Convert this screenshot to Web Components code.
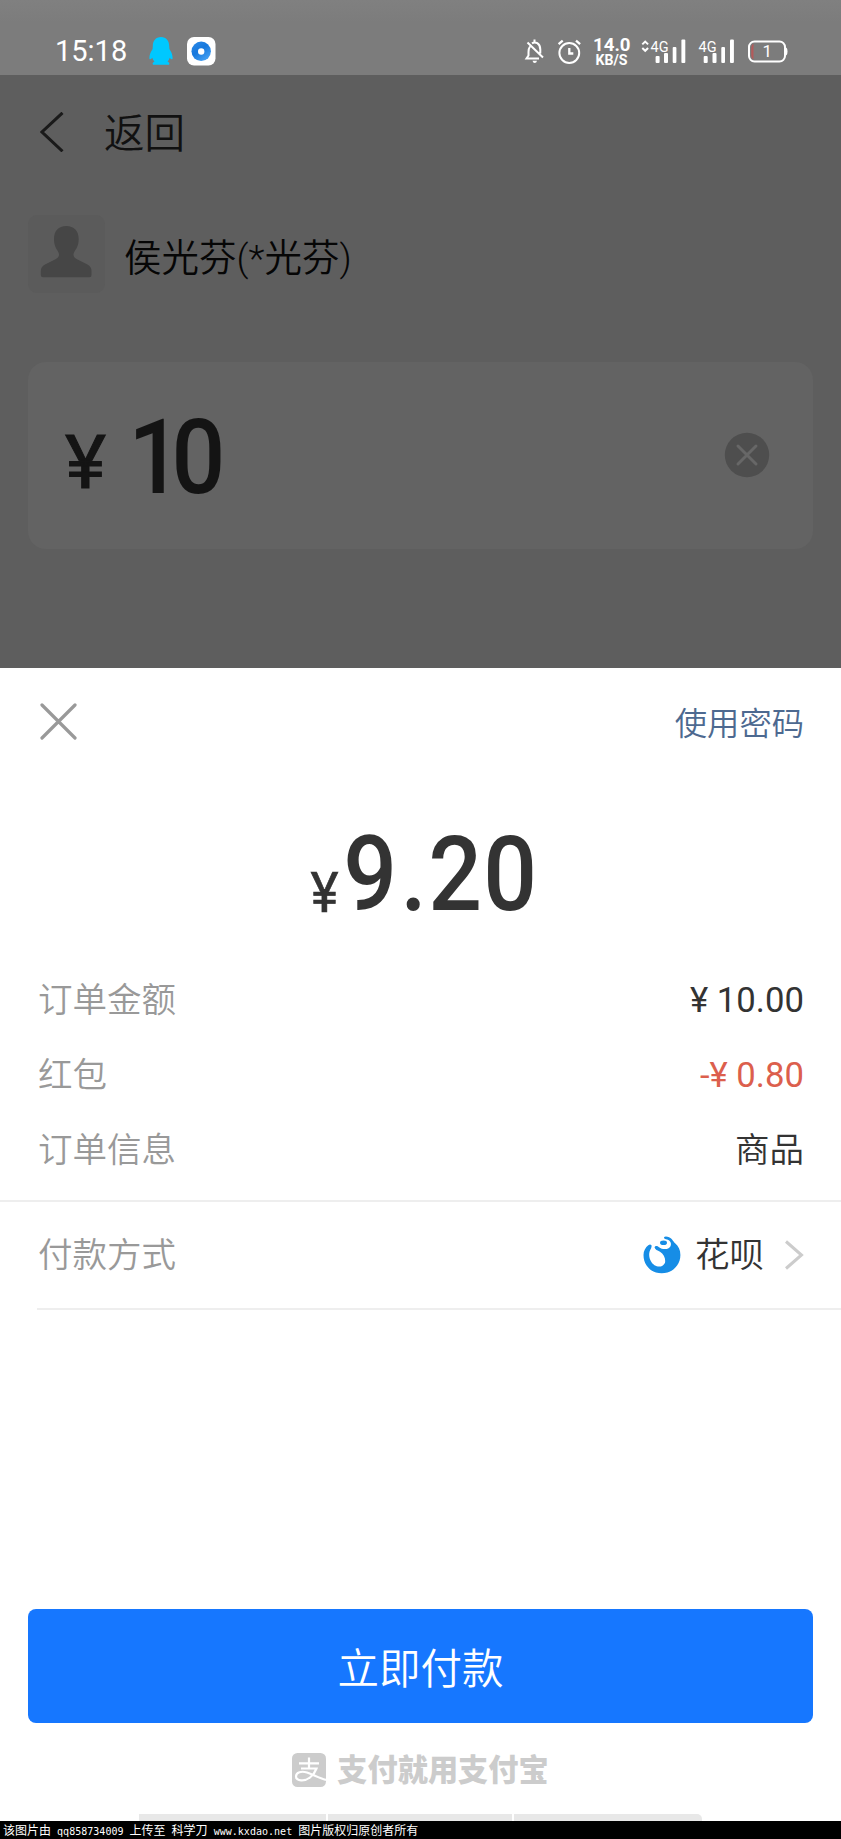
<!DOCTYPE html>
<html lang="zh-CN">
<head>
<meta charset="utf-8">
<title>付款</title>
<style>
html,body{margin:0;padding:0}
body{width:841px;height:1839px;overflow:hidden;background:#fff;font-family:Roboto,"Noto Sans CJK SC",sans-serif}
</style>
</head>
<body>
<pay-screen></pay-screen>
<script>
function define(name, html){
  const t=document.createElement('template');
  t.innerHTML=html;
  customElements.define(name, class extends HTMLElement{
    constructor(){super();this.attachShadow({mode:'open'}).appendChild(t.content.cloneNode(true));}
  });
}

define('status-bar', `
<style>
:host{display:flex;box-sizing:border-box;height:75px;padding:0 53px 0 55px;background:linear-gradient(#808080,#7c7c7c 30%,#7c7c7c);color:#fff;align-items:flex-start}
svg{display:block;flex:none}
time{font:400 29px/34px Roboto,sans-serif;margin-top:34px;width:94px;white-space:nowrap}
.app{margin:37px 0 0 14px}
.spring{flex:1}
.r{margin-top:16px;overflow:visible}
</style>
<time>15:18</time>
<svg style="margin-top:37px" width="24" height="29" viewBox="0 0 24 29"><path fill="#00c8ff" d="M12 0C6.600 0 3.800 4 3.800 9L3.600 12Q0 17.500.4 21.500Q.7 23.400 3.300 20.800Q4 23.300 5.500 24.600Q2.800 25.800 4 27.800H20Q21.200 25.800 18.500 24.600Q20 23.300 20.700 20.800Q23.300 23.400 23.600 21.500Q24 17.500 20.400 12L20.200 9C20.200 4 17.400 0 12 0Z"/></svg>
<svg class="app" width="29" height="29" viewBox="0 0 29 29"><defs><linearGradient id="g" x1="0" y1="0" x2=".7" y2="1"><stop offset="0" stop-color="#2e8be8"/><stop offset=".5" stop-color="#1678dd"/><stop offset="1" stop-color="#45a0f2"/></linearGradient></defs><rect width="28.500" height="28.500" rx="7" fill="#fff"/><circle cx="14.200" cy="14.300" r="9.700" fill="url(#g)"/><circle cx="14.200" cy="14.500" r="3.200" fill="#fff"/></svg>
<span class="spring"></span>
<svg class="r" width="264" height="59" viewBox="524 16 264 59" fill="none" stroke="#fff" stroke-width="2">
 <path d="M530 46.500Q528.500 48.500 528.500 52V55.500L526.500 58.500H539M532 43.400Q534.500 41.600 537.300 43.200Q540.200 45 540.300 49.500V53.500M534.500 39.500V42M527.500 42.500L543 57.500"/><path d="M532.500 60.700H537Q536.500 63 534.700 63Q533 63 532.500 60.700Z" fill="#fff" stroke="none"/>
 <circle cx="569.300" cy="53" r="9.900"/><path d="M569.300 48V53.500H573.300M558.600 44.200L562.700 40.700M576 40.700L580.100 44.200" stroke-width="2.300"/>
 <g fill="#fff" stroke="none" font-family="Roboto,sans-serif">
  <text x="593" y="51" font-size="18" font-weight="700" textLength="37.500" lengthAdjust="spacingAndGlyphs">14.0</text>
  <text x="595.500" y="65" font-size="14" font-weight="700" textLength="32" lengthAdjust="spacingAndGlyphs">KB/S</text>
  <text x="650.500" y="51.600" font-size="15.500" textLength="18" lengthAdjust="spacingAndGlyphs">4G</text>
  <text x="698.500" y="51.600" font-size="15.500" textLength="18" lengthAdjust="spacingAndGlyphs">4G</text>
  <rect x="655.600" y="56" width="4" height="7" rx="1"/><rect x="664" y="53" width="4" height="10" rx="1"/><rect x="672.700" y="47" width="3.700" height="16" rx="1"/><rect x="681.400" y="39.500" width="3.900" height="23.500" rx="1"/>
  <rect x="703.700" y="56" width="4" height="7" rx="1"/><rect x="712.500" y="53" width="4" height="10" rx="1"/><rect x="721.300" y="47" width="3.700" height="16" rx="1"/><rect x="730" y="39.500" width="3.900" height="23.500" rx="1"/>
  <text x="762.500" y="57.300" font-size="17">1</text>
  <path d="M785.500 47.500Q787.500 47.500 787.500 51.500T785.500 55.500Z"/>
 </g>
 <path d="M642.300 44.400L645.200 41.600L648.100 44.400M642.300 48L645.200 50.800L648.100 48"/>
 <path d="M753.500 43.500Q751.200 44.500 751.200 48V55Q751.200 58.500 753.500 59.500Z" fill="#b35a5a" stroke="none"/>
 <rect x="749" y="41.500" width="36" height="20" rx="5.500"/>
</svg>`);

define('page-header', `
<style>
:host{display:flex;align-items:center;height:113px;padding-left:40px;box-sizing:border-box}
svg{display:block;margin-right:40px}
b{font:350 40.500px/60px "Noto Sans CJK SC",sans-serif;color:#111;margin-top:-2px}
</style>
<svg width="24" height="40" viewBox="0 0 24 40"><path d="M22.500 .8L2 20L22.500 39.300" fill="none" stroke="#1a1a1a" stroke-width="3"/></svg><b><slot></slot></b>`);

define('payee-info', `
<style>
:host{display:flex;align-items:center;height:78px;margin-top:27px;padding-left:28px}
i{display:block;width:77px;height:78px;border-radius:9px;background:#5b5b5b}
svg{display:block}
span{font:350 37.500px/54px Roboto,"Noto Sans CJK SC",sans-serif;margin:7px 0 0 19px;color:#060606;white-space:nowrap}
</style>
<i><svg width="77" height="78" viewBox="0 0 77 78"><path fill="#464646" d="M38.300 11C30.500 11 26 16 26 24C26 30.500 28.200 33.500 30 36.500C32 40 31 42.500 27.500 44.200L17 49.500Q12.800 51.800 12.800 56V60Q12.800 62.300 15 62.300H61.500Q63.500 62.300 63.500 60V56Q63.500 51.800 59.500 49.500L49 44.200C45.500 42.500 44.500 40 46.500 36.500C48.500 33.500 50.700 30.500 50.700 24C50.700 16 46 11 38.300 11Z"/></svg></i><span><slot></slot></span>`);

define('amount-card', `
<style>
:host{display:flex;align-items:center;justify-content:space-between;box-sizing:border-box;width:785px;height:187px;margin:69px 28px 0;padding:0 43px 0 32px;border-radius:18px;background:#636363}
svg{display:block;overflow:visible}
.clear{margin-bottom:2px}
</style>
<svg width="170" height="150" viewBox="60 380.500 170 150" fill="#141414" font-family="Roboto,sans-serif" font-weight="500"><text x="65" y="487" font-size="75" font-weight="400" stroke="#141414" stroke-width="1" textLength="41" lengthAdjust="spacingAndGlyphs">¥</text><text transform="scale(.91 1)" x="141 188.500" y="493" font-size="104">10</text></svg>
<svg class="clear" width="46" height="46" viewBox="-23 -23 46 46"><circle r="22.200" fill="#4e4e4e"/><path d="M-9 -9L9 9M9 -9L-9 9" stroke="#676767" stroke-width="3" stroke-linecap="round"/></svg>`);

define('sheet-head', `
<style>
:host{display:flex;justify-content:space-between;align-items:center;height:107px;padding:0 37px 0 40px}
svg{display:block}
span{font:350 32.300px/48px "Noto Sans CJK SC",sans-serif;color:#4d6990;margin-top:-1px}
</style>
<svg width="37" height="37" viewBox="0 0 37 37"><path d="M2 2L35 35M35 2L2 35" stroke="#999" stroke-width="3.200" stroke-linecap="round"/></svg><span><slot></slot></span>`);

define('total-amount', `
<style>:host{display:flex;justify-content:center;height:187px;align-items:center}svg{display:block;overflow:visible}</style>
<svg width="240" height="150" viewBox="300 793.500 240 150" fill="#333" font-family="Roboto,sans-serif" font-weight="500"><text x="309.500" y="911" font-size="56" font-weight="400" stroke="#333" stroke-width=".6" textLength="28" lengthAdjust="spacingAndGlyphs">¥</text><text transform="scale(.91 1)" x="376 439 469.500 530" y="910" font-size="104">9.20</text></svg>`);

define('detail-row', `
<style>
:host{display:flex;justify-content:space-between;align-items:center;height:74.700px;padding:0 37px 0 38px;font:350 34.500px/50px Roboto,"Noto Sans CJK SC",sans-serif;color:#333}
.l{color:#999}
.v{display:flex;align-items:center}
</style>
<span class="l"><slot name="label"></slot></span><span class="v"><slot></slot></span>`);

define('huabei-logo', `
<style>:host{display:block;margin-right:14px}svg{display:block}</style>
<svg width="38" height="38" viewBox="0 0 38 38"><path fill="#168de6" d="M5.300 9.200Q7.200 7.800 8.400 9.200Q9 10 8 12.500C5.500 16.500 5.700 21 7.800 24.900C10.800 31 19 33 21.900 27C23 23.500 21 18.200 17 15.800C14.500 14.300 12 13.800 11.500 11.300C12.500 9.200 14.500 9.700 16 11.200C19.500 13.900 25.600 13.800 27.500 10.200C29 6.500 26.400 3.500 23 3.300Q20.500 2.700 21.200 1.100Q22 .1 24.500 .7C29.300 1.800 29.900 5.300 32.100 7.200C35.400 9.800 37.400 13.800 37.400 18.900C37.400 29.300 29 37.300 18.700 37.300C8.400 37.300 .5 29.300 .5 18.900C.5 15 2.500 11.300 5.300 9.200Z"/><ellipse cx="20.500" cy="6.800" rx="3.500" ry="2.300" fill="#168de6"/></svg>`);

define('arrow-right', `
<style>:host{display:block;margin-left:20px}svg{display:block}</style>
<svg width="20" height="32" viewBox="0 0 20 32"><path d="M2 2.500L17.500 16L2 29.500" fill="none" stroke="#ccc" stroke-width="3"/></svg>`);

define('pay-button', `
<style>
:host{display:flex;align-items:center;justify-content:center;width:785px;height:114.500px;margin:298.500px 28px 0;border-radius:8px;background:#1677ff;color:#fff;font:350 41.500px/60px "Noto Sans CJK SC",sans-serif}
</style><slot></slot>`);

define('brand-line', `
<style>
:host{display:flex;align-items:center;justify-content:center;height:33px;margin-top:30px;color:#ccc}
svg{display:block;margin-right:11px}
span{font:900 30.200px/33px "Noto Sans CJK SC",sans-serif;margin-top:-2px}
</style>
<svg width="34" height="34" viewBox="0 0 34 34"><rect width="34" height="34" rx="5.500" fill="#ccc"/><path d="M7 10.300H27M17 4.500V15.500M9 15.500H24.500Q22.500 21 18 24.500C12.500 28.800 4 28 4 23.500C4 19 9.500 17.800 15 19.500C21 21.500 27 25 34 27" fill="none" stroke="#fff" stroke-width="2.200"/></svg><span><slot></slot></span>`);

define('nav-strip', `
<style>
:host{display:grid;grid-template-columns:187px 184px 188px;gap:2px;width:563px;height:7px;margin:28px auto 0 139px}
i{background:#e8e8e8}i:first-child{border-top-left-radius:5px}i:last-child{border-top-right-radius:5px}
</style><i></i><i></i><i></i>`);

define('source-note', `<style>
:host{display:block;box-sizing:border-box;height:18px;padding-left:3px;background:#000;color:#fff;font:12px/17px "Noto Sans CJK SC",sans-serif;white-space:pre}
b{font:400 10px/17px "DejaVu Sans Mono",monospace;letter-spacing:.02px}
</style>该图片由<b> qq858734009 </b>上传至<b> </b>科学刀<b> www.kxdao.net </b>图片版权归原创者所有`);

define('pay-sheet', `
<style>
:host{display:block;height:1171px;background:#fff}
.pay{height:106px;border-top:2px solid #eee;margin-top:13px;display:grid;align-items:center}
.rows{padding-top:1px}
.line{height:2px;margin-left:37px;background:#eee}
.num{font:400 34.700px/50px Roboto,sans-serif;white-space:pre}
.red{color:#dc5f4d}
</style>
<sheet-head>使用密码</sheet-head>
<total-amount></total-amount>
<div class="rows">
<detail-row><span slot="label">订单金额</span><span class="num">¥ 10.00</span></detail-row>
<detail-row><span slot="label">红包</span><span class="num red">-¥ 0.80</span></detail-row>
<detail-row><span slot="label">订单信息</span>商品</detail-row>
</div>
<div class="pay"><detail-row><span slot="label">付款方式</span><huabei-logo></huabei-logo>花呗<arrow-right></arrow-right></detail-row></div>
<div class="line"></div>
<pay-button>立即付款</pay-button>
<brand-line>支付就用支付宝</brand-line>
<nav-strip></nav-strip>
<source-note></source-note>`);

define('pay-screen', `
<style>
:host{display:block;width:841px;height:1839px;overflow:hidden}
.under{height:593px;background:#5e5e5e;display:flow-root}
</style>
<status-bar></status-bar>
<div class="under"><page-header>返回</page-header><payee-info>侯光芬(*光芬)</payee-info><amount-card></amount-card></div>
<pay-sheet></pay-sheet>`);
</script>
</body>
</html>
